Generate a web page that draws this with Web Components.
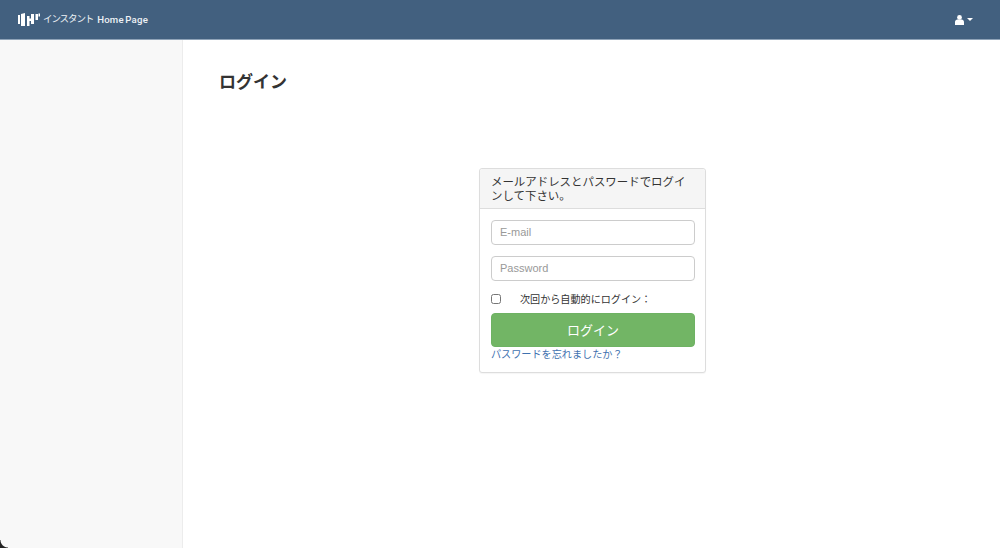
<!DOCTYPE html>
<html lang="ja">
<head>
<meta charset="utf-8">
<title>ログイン</title>
<style>
html,body{margin:0;height:100%;background:#fff;overflow:hidden}
body{font-family:"Liberation Sans","Noto Sans CJK JP",sans-serif;color:#333}
</style>
</head>
<body>
<app-shell>
  <top-bar slot="top"></top-bar>
  <side-bar slot="side"></side-bar>
  <h1-title>ログイン</h1-title>
  <login-panel>メールアドレスとパスワードでログインして下さい。</login-panel>
</app-shell>

<script>
const FONT = '"Liberation Sans","Noto Sans CJK JP",sans-serif';

class AppShell extends HTMLElement {
    constructor() {
        super();
        this.attachShadow({mode: 'open'});
        this.shadowRoot.innerHTML = `
<style>
:host{display:flex;flex-direction:column;height:548px;position:relative;overflow:hidden}
.body{display:flex;flex:1;min-height:0}
main{flex:1;padding:31px 36px 0}
.corner{position:absolute;left:0;bottom:0;width:8px;height:8px;background:radial-gradient(circle at 100% 0,transparent 7px,#222 8px)}
</style>
<slot name="top"></slot>
<div class="body">
  <slot name="side"></slot>
  <main><slot></slot></main>
</div>
<div class="corner"></div>`;
    }
}
customElements.define('app-shell', AppShell);

class TopBar extends HTMLElement {
    constructor() {
        super();
        this.attachShadow({mode: 'open'});
        this.shadowRoot.innerHTML = `
<style>
:host{display:flex;align-items:center;justify-content:space-between;height:40px;box-sizing:border-box;padding:0 27px 0 18px;background:#42607f;border-bottom:1px solid #8fa3b8;color:#fff;font-family:${FONT}}
.brand{display:flex;align-items:center;color:#eef2f6}
.jp{margin-left:3px;font-size:9.500px;line-height:12px;letter-spacing:-1.100px;padding-bottom:1px}
.en{margin-left:4px;font:500 9.600px/12px Roboto,sans-serif;letter-spacing:.2px;word-spacing:-1px}
svg{display:block}
.user{display:flex;align-items:center;gap:3px}
.caret{width:0;height:0;border:3px solid transparent;border-top-color:#fff;border-bottom:0}
</style>
<div class="brand">
  <svg width="22" height="13" viewBox="0 0 22 13" fill="#fff">
    <rect x="0" y="2" width="2" height="9"/><path d="M3 1l4-1v13H3z"/>
    <path d="M9 3h2.500v2.500H13V1h3v10h-3V8h-1.500v5H9z"/>
    <rect x="17.500" y="1" width="2.500" height="6"/><rect x="20.500" y="0.500" width="1.500" height="3"/>
  </svg>
  <span class="jp">インスタント</span><span class="en">Home Page</span>
</div>
<div class="user">
  <svg width="9" height="10" viewBox="0 0 9 10" fill="#fff"><circle cx="4.500" cy="2.400" r="2.400"/><path d="M0 10V7.200C0 5.600 1.200 4.600 2.400 4.600h4.200C7.800 4.600 9 5.600 9 7.200V10z"/></svg>
  <span class="caret"></span>
</div>`;
    }
}
customElements.define('top-bar', TopBar);

class SideBar extends HTMLElement {
    constructor() {
        super();
        this.attachShadow({mode: 'open'});
        this.shadowRoot.innerHTML = `
<style>
:host{display:block;width:183px;box-sizing:border-box;flex:none;background:#f8f8f8;border-right:1px solid #ececec}
</style>`;
    }
}
customElements.define('side-bar', SideBar);

class H1Title extends HTMLElement {
    constructor() {
        super();
        this.attachShadow({mode: 'open'});
        this.shadowRoot.innerHTML = `
<style>
:host{display:block;font:bold 17px/24px ${FONT};color:#333}
</style>
<slot></slot>`;
    }
}
customElements.define('h1-title', H1Title);

class TextField extends HTMLElement {
    constructor() {
        super();
        this.attachShadow({mode: 'open'});
        this.shadowRoot.innerHTML = `
<style>
:host{display:block}
input{display:block;width:100%;height:25px;box-sizing:border-box;padding:0 8px 2px;border:1px solid #ccc;border-radius:4px;background:#fff;font:11px ${FONT};color:#555;outline:0}
input::placeholder{color:#999;opacity:1}
</style>
<input>`;
        const input = this.shadowRoot.querySelector('input');
        input.placeholder = this.getAttribute('placeholder');
        input.type = this.getAttribute('type') || 'text';
    }
}
customElements.define('text-field', TextField);

class LoginPanel extends HTMLElement {
    constructor() {
        super();
        this.attachShadow({mode: 'open'});
        this.shadowRoot.innerHTML = `
<style>
:host{display:block;width:227px;box-sizing:border-box;margin:73px 0 0 260px;border:1px solid #ddd;border-radius:3px;background:#fff;font-family:${FONT};box-shadow:0 1px 1px rgba(0,0,0,.04)}
header{background:#f5f5f5;border-bottom:1px solid #ddd;padding:7px 11px 5px;font-size:11.450px;line-height:13.500px;color:#333;border-radius:3px 3px 0 0}
.body{padding:11px 10px 10px 11px;display:flex;flex-direction:column}
text-field+text-field{margin-top:11px}
label{display:flex;align-items:center;margin-top:10px;height:15px;font-size:10.100px;color:#333}
input[type=checkbox]{width:10px;height:10px;margin:0 19px 0 0}
button{display:block;width:100%;height:34px;margin-top:7px;border:1px solid #6eb263;border-radius:4px;background:#72b565;color:#fff;font:13px ${FONT};padding:0 0 2px}
a{margin-top:1px;font-size:10.150px;line-height:14px;color:#3f72af;text-decoration:none}
</style>
<header><slot></slot></header>
<div class="body">
  <text-field placeholder="E-mail"></text-field>
  <text-field placeholder="Password" type="password"></text-field>
  <label><input type="checkbox">次回から自動的にログイン：</label>
  <button>ログイン</button>
  <a href="#">パスワードを忘れましたか？</a>
</div>`;
    }
}
customElements.define('login-panel', LoginPanel);
</script>
</body>
</html>
